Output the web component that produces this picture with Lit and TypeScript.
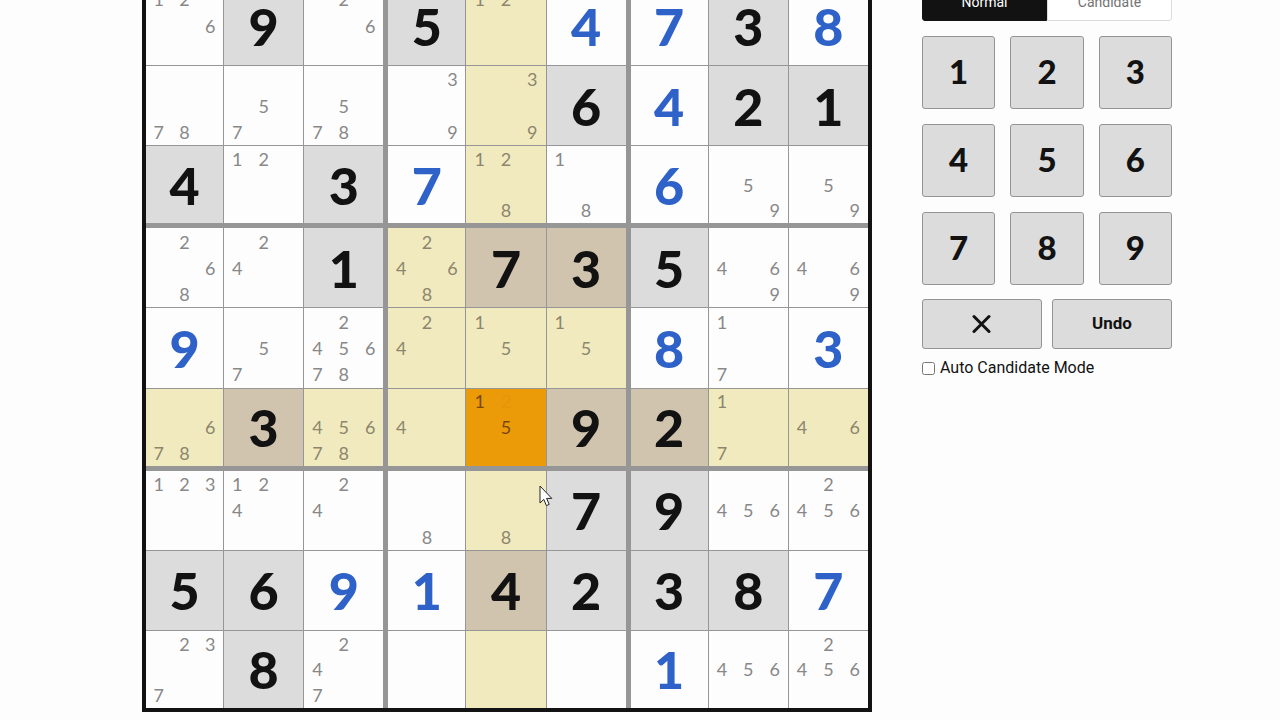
import { LitElement, html, css, nothing } from "lit";
import { customElement, property, state } from "lit/decorators.js";
import { classMap } from "lit/directives/class-map.js";

// "g" marks a printed clue, "f" a digit the player filled in,
// anything else is the list of pencilled candidates.
const PUZZLE: string[][] = [
  ["126", "g9", "26", "g5", "12", "f4", "f7", "g3", "f8"],
  ["78", "57", "578", "39", "39", "g6", "f4", "g2", "g1"],
  ["g4", "12", "g3", "f7", "128", "18", "f6", "59", "59"],
  ["268", "24", "g1", "2468", "g7", "g3", "g5", "469", "469"],
  ["f9", "57", "245678", "24", "15", "15", "f8", "17", "f3"],
  ["678", "g3", "45678", "4", "15", "g9", "g2", "17", "46"],
  ["123", "124", "24", "8", "8", "g7", "g9", "456", "2456"],
  ["g5", "g6", "f9", "f1", "g4", "g2", "g3", "g8", "f7"],
  ["237", "g8", "247", "", "", "", "f1", "456", "2456"],
];

const DIGITS = [1, 2, 3, 4, 5, 6, 7, 8, 9];
const boxOf = (row: number, col: number) =>
  Math.floor(row / 3) * 3 + Math.floor(col / 3);

@customElement("sudoku-cell")
class SudokuCell extends LitElement {
  @property() value = "";
  @property({ type: Boolean }) peer = false;
  @property({ type: Boolean }) selected = false;
  @property() erased = "";

  static styles = css`
    :host {
      display: block;
      min-width: 0;
      min-height: 0;
    }
    .cell {
      display: grid;
      place-items: center;
      box-sizing: border-box;
      width: 100%;
      height: 100%;
      margin: 0;
      padding: 0;
      border: 0;
      background: #fdfdfd;
      color: #121212;
      font: 900 52px/1 Lato, sans-serif;
    }
    .filled {
      color: #2f62c9;
    }
    .given {
      background: #dcdcdc;
    }
    .peer {
      background: #f2eabf;
    }
    .peer.given {
      background: #d0c4ae;
    }
    .selected {
      background: #ec9b08;
    }
    .notes {
      display: grid;
      grid-template: repeat(3, 1fr) / repeat(3, 1fr);
      place-items: center;
      width: 100%;
      height: 100%;
      color: #888;
      font: 400 18px/1 Lato, sans-serif;
    }
    .peer .notes {
      color: #8c866d;
    }
    .selected .notes {
      color: #7a4708;
    }
    .erased {
      opacity: 0.05;
    }
  `;

  render() {
    const kind = this.value[0];
    const solid = kind === "g" || kind === "f";
    return html`<button
      class=${classMap({
        cell: true,
        given: kind === "g",
        filled: kind === "f",
        peer: this.peer && !this.selected,
        selected: this.selected,
      })}
    >
      ${solid
        ? this.value[1]
        : html`<span class="notes"
            >${DIGITS.map((d) => {
              const n = String(d);
              if (n === this.erased) return html`<span class="erased">${n}</span>`;
              return html`<span>${this.value.includes(n) ? n : nothing}</span>`;
            })}</span
          >`}
    </button>`;
  }
}

@customElement("sudoku-board")
class SudokuBoard extends LitElement {
  @state() private row = 5;
  @state() private col = 4;

  static styles = css`
    :host {
      display: block;
    }
    .board {
      box-sizing: border-box;
      display: grid;
      grid-template: repeat(3, minmax(0, 1fr)) / repeat(3, minmax(0, 1fr));
      gap: 5px;
      width: 100%;
      aspect-ratio: 1;
      border: 4px solid #121212;
      background: #969696;
    }
    .box {
      display: grid;
      grid-template-columns: 77fr 79fr 79fr;
      grid-template-rows: 79fr 79fr 77fr;
      gap: 1px;
    }
  `;

  private cell(row: number, col: number) {
    const selected = row === this.row && col === this.col;
    const peer =
      row === this.row ||
      col === this.col ||
      boxOf(row, col) === boxOf(this.row, this.col);
    return html`<sudoku-cell
      .value=${PUZZLE[row][col]}
      .peer=${peer}
      .selected=${selected}
      .erased=${row === 5 && col === 4 ? "2" : ""}
      @click=${() => {
        this.row = row;
        this.col = col;
      }}
    ></sudoku-cell>`;
  }

  render() {
    return html`<div class="board">
      ${DIGITS.map((_, b) => {
        const top = Math.floor(b / 3) * 3;
        const left = (b % 3) * 3;
        return html`<div class="box">
          ${DIGITS.map((_, i) => this.cell(top + Math.floor(i / 3), left + (i % 3)))}
        </div>`;
      })}
    </div>`;
  }
}

@customElement("sudoku-controls")
class SudokuControls extends LitElement {
  static styles = css`
    :host {
      display: block;
      font-family: Roboto, sans-serif;
      color: #121212;
    }
    button {
      margin: 0;
      padding: 0;
      font-family: inherit;
    }
    .modes {
      display: grid;
      grid-template-columns: 1fr 1fr;
    }
    .mode {
      height: 39px;
      border: 1px solid #dcdcdc;
      border-radius: 0 3px 3px 0;
      background: #fff;
      color: #727272;
      font-size: 14px;
      line-height: 16px;
    }
    .mode.active {
      border-color: #121212;
      border-radius: 3px 0 0 3px;
      background: #121212;
      color: #fff;
    }
    .keys {
      display: grid;
      grid-template-columns: repeat(3, 1fr);
      gap: 15px;
      margin-top: 15px;
    }
    .key {
      display: grid;
      place-items: center;
      padding-bottom: 2px;
      border: 1px solid #949494;
      border-radius: 3px;
      background: #dcdcdc;
      color: #121212;
    }
    .digit {
      height: 73px;
      font: 900 33px/1 Lato, sans-serif;
    }
    .actions {
      display: grid;
      grid-template-columns: 1fr 1fr;
      gap: 10px;
      margin-top: 14px;
    }
    .action {
      height: 50px;
      font-size: 17px;
      font-weight: 700;
    }
    .erase {
      padding-bottom: 0;
    }
    .cross {
      display: block;
      width: 20px;
      height: 20px;
    }
    .auto {
      display: flex;
      align-items: center;
      gap: 5px;
      margin-top: 9px;
      font-size: 16px;
      line-height: 20px;
    }
    .tick {
      width: 13px;
      height: 13px;
      margin: 0;
    }
  `;

  render() {
    return html`
      <div class="modes">
        <button class="mode active">Normal</button>
        <button class="mode">Candidate</button>
      </div>
      <div class="keys">
        ${DIGITS.map((d) => html`<button class="key digit">${d}</button>`)}
      </div>
      <div class="actions">
        <button class="key action erase" aria-label="Erase">
          <svg class="cross" viewBox="0 0 20 20">
            <path
              d="M2 2.5 17 17.5M17 2.5 2 17.5"
              fill="none"
              stroke="#121212"
              stroke-width="3"
              stroke-linecap="round"
            />
          </svg>
        </button>
        <button class="key action">Undo</button>
      </div>
      <label class="auto"
        ><input class="tick" type="checkbox" />Auto Candidate Mode</label
      >
    `;
  }
}

@customElement("app-root")
class AppRoot extends LitElement {
  static styles = css`
    :host {
      display: block;
      position: relative;
      height: 100vh;
      overflow: hidden;
      background: #fdfdfd;
    }
    .game {
      display: flex;
      align-items: flex-start;
      gap: 50px;
      margin-top: -18px;
      padding: 0 108px 8px 142px;
    }
    .grid {
      flex: 1 1 0;
      min-width: 0;
      max-width: 730px;
    }
    .side {
      flex: 0 0 250px;
    }
    .pointer {
      position: absolute;
      left: 539px;
      top: 485px;
      width: 14px;
      height: 22px;
      pointer-events: none;
    }
  `;

  render() {
    return html`
      <main class="game">
        <sudoku-board class="grid"></sudoku-board>
        <sudoku-controls class="side"></sudoku-controls>
      </main>
      <svg class="pointer" viewBox="0 0 14 22">
        <path
          d="M1 1V18L4.8 14.4 7.4 20.6 10.2 19.4 7.6 13.4H12.8Z"
          fill="#fff"
          stroke="#222"
          stroke-width="1"
          stroke-linejoin="round"
        />
      </svg>
    `;
  }
}
